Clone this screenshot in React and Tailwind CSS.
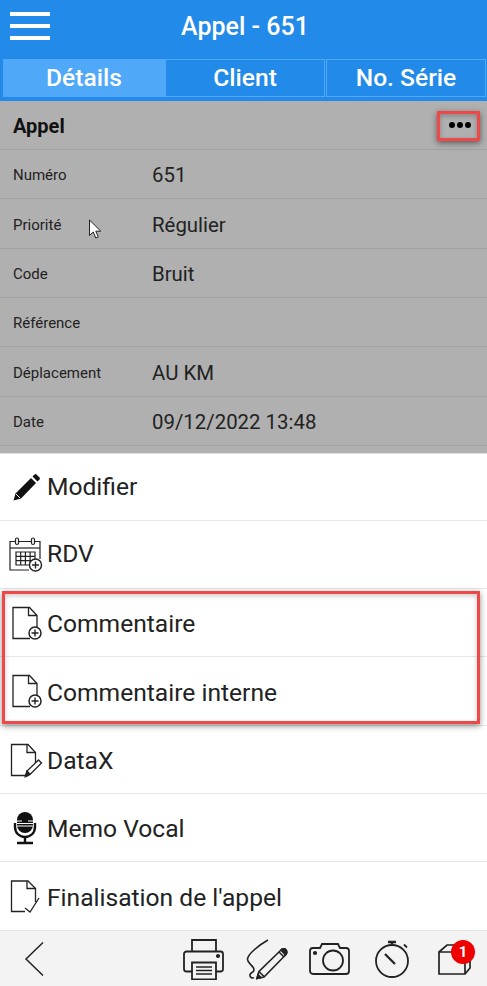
import { useState } from "react";

const details = [
  { label: "Numéro", value: "651" },
  { label: "Priorité", value: "Régulier" },
  { label: "Code", value: "Bruit" },
  { label: "Référence", value: "" },
  { label: "Déplacement", value: "AU KM" },
  { label: "Date", value: "09/12/2022 13:48" },
];

function Doc({ x = 2.5, children }) {
  return (
    <svg width="36" height="36" viewBox="0 0 36 36" fill="none" stroke="#222" strokeWidth="1.3">
      <path d={`M${x + 24} 24V10.500L${x + 16.5} 2.500H${x}V33.500H${x + 17}`} />
      <path d={`M${x + 15.5} 2.500V10.500H${x + 24}`} />
      {children}
    </svg>
  );
}

const icons = {
  pencil: (
    <svg width="36" height="36" viewBox="0 0 36 36" fill="#111">
      <path d="M4.500 31.500 6.500 24.500 22 9l5 5L12 29.500z" />
      <path d="M23.500 7.500 25.500 5.500a1.500 1.500 0 0 1 2 0l3 3a1.500 1.500 0 0 1 0 2L28.500 12.500z" />
      <path d="M7 25 11 29" stroke="#fff" strokeWidth="1" />
    </svg>
  ),
  calendar: (
    <svg width="36" height="36" viewBox="0 0 36 36" fill="none" stroke="#222" strokeWidth="1.200">
      <path d="M31 22V4.500H1V33H20" />
      <path d="M1 11h30" />
      <rect x="6.500" y="1" width="3" height="6.500" rx="1.500" fill="#fff" />
      <rect x="22.500" y="1" width="3" height="6.500" rx="1.500" fill="#fff" />
      <path d="M7 15h19v13H7zM7 19.300h19M7 23.600h19M11.700 15v13M16.400 15v13M21.100 15v13" strokeWidth="1.200" />
      <circle cx="26.500" cy="28" r="6" fill="#fff" strokeWidth="1.400" />
      <path d="M26.500 24.500v7M23 28h7" strokeWidth="1.400" />
    </svg>
  ),
  comment: (
    <Doc x={4}>
      <circle cx="26" cy="28" r="6" fill="#fff" strokeWidth="1.500" />
      <path d="M26 24.500v7M22.500 28h7" strokeWidth="1.400" />
    </Doc>
  ),
  datax: (
    <Doc>
      <path d="M16.500 34.500 18 29 29.500 18l3 3L21 32.500z" fill="#fff" />
      <path d="M16.500 34.500 18 29l3 3z" fill="#222" />
    </Doc>
  ),
  mic: (
    <svg width="36" height="36" viewBox="0 0 36 36" fill="none">
      <rect x="8" y="2" width="16" height="21" rx="8" fill="#111" />
      <path d="M8 11h5M19 11h5M8 13.500h16M8 16h16" stroke="#fff" strokeWidth="1" />
      <path d="M6 13v4c0 6 4.500 10 10 10s10-4 10-10v-4" stroke="#111" strokeWidth="2.400" />
      <path d="M16 27v5M8 33h16" stroke="#111" strokeWidth="2.400" />
    </svg>
  ),
  final: (
    <svg width="36" height="36" viewBox="0 0 36 36" fill="none" stroke="#222" strokeWidth="1.300">
      <path d="M26.500 24V10.500L19 3H2.500V33.500H16" />
      <path d="M18 3V10.500H26.500" />
      <path d="M16 30l5 4 9-14" />
    </svg>
  ),
};

const menu = [
  { label: "Modifier", icon: "pencil", rowH: "h-[67px]", textPad: "" },
  { label: "RDV", icon: "calendar", rowH: "h-[68px]", textPad: "" },
  { label: "Commentaire", icon: "comment", rowH: "h-[68px]", textPad: "pt-1" },
  { label: "Commentaire interne", icon: "comment", rowH: "h-[69px]", textPad: "pt-1" },
  { label: "DataX", icon: "datax", rowH: "h-[68px]", textPad: "pt-1" },
  { label: "Memo Vocal", icon: "mic", rowH: "h-[68px]", textPad: "pt-1" },
  { label: "Finalisation de l'appel", icon: "final", rowH: "h-[69px]", textPad: "pt-1" },
];

const tabs = [
  { label: "Détails", width: "w-[162px]" },
  { label: "Client", width: "w-[160px]" },
  { label: "No. Série", width: "w-[160px] ml-px" },
];

export default function App() {
  const [tab, setTab] = useState("Détails");

  return (
    <div className="relative w-[487px] h-[986px] overflow-hidden bg-white font-['Roboto',sans-serif] text-[#222]">
      {/* HEADER */}
      <div className="bg-[#228ae8] h-[101px]">
        <div className="relative h-[59px] flex items-center justify-center pb-[6px] pl-[3px]">
          <div className="absolute left-[10px] top-[12px] w-10 flex flex-col gap-[8.500px]">
            <div className="h-[3.500px] bg-white" />
            <div className="h-[3.500px] bg-white" />
            <div className="h-[3.500px] bg-white" />
          </div>
          <span className="text-white text-[25px] font-medium">Appel - 651</span>
        </div>
        <div className="flex pl-[3px]">
          {tabs.map((t) => (
            <button
              key={t.label}
              onClick={() => setTab(t.label)}
              className={`${t.width} h-[38px] border border-[#4fa8f8] text-white text-[24.600px] font-medium leading-none ${
                tab === t.label ? "bg-[#4fa8f8]" : "bg-[#228ae8]"
              }`}
            >
              {t.label}
            </button>
          ))}
        </div>
      </div>

      {/* DETAILS (dimmed) */}
      <div className="bg-[#b0b0b0] h-[352px] text-[#111]">
        <div className="h-[49px] flex items-center justify-between pl-[13px] pr-[16px] border-b border-[#a2a2a2]">
          <span className="text-[20px] font-bold pt-[2px]">Appel</span>
          <div className="flex gap-[2px]">
            <span className="w-[6px] h-[6px] rounded-full bg-black" />
            <span className="w-[6px] h-[6px] rounded-full bg-black" />
            <span className="w-[6px] h-[6px] rounded-full bg-black" />
          </div>
        </div>
        {details.map((d) => (
          <div key={d.label} className="h-[49.330px] flex items-center pl-[13px] pt-[3px] border-b border-[#a2a2a2]">
            <span className="w-[139px] text-[15px] text-[#222]">{d.label}</span>
            <span className="text-[20.400px] text-[#222]">{d.value}</span>
          </div>
        ))}
      </div>

      {/* MENU */}
      <div className="border-t border-[#e0e0e0]">
        {menu.map((m) => (
          <div key={m.label} className={`${m.rowH} flex items-center pl-[9px] gap-[2px] border-b border-[#e6e6e6]`}>
            {icons[m.icon]}
            <span className={`text-[24.600px] text-[#222] ${m.textPad}`}>{m.label}</span>
          </div>
        ))}
      </div>

      {/* FOOTER */}
      <div className="h-[56px] bg-[#f3f3f3] flex items-center pl-[22px]">
        <svg width="26" height="36" viewBox="0 0 26 36" fill="none" stroke="#222" strokeWidth="1.500">
          <path d="M21 1.500 4 18l17 16.500" />
        </svg>
        <svg className="ml-[134px]" width="42" height="42" viewBox="0 0 42 42" fill="none" stroke="#222" strokeWidth="1.800">
          <path d="M10 13.500V2h24v11.500" />
          <path d="M10 33.500H4.500a2.500 2.500 0 0 1-2.500-2.500V16a2.500 2.500 0 0 1 2.500-2.500h34a2.500 2.500 0 0 1 2.500 2.500v15a2.500 2.500 0 0 1-2.500 2.500H34" />
          <path d="M10 24.500h24v17H10z" fill="#f3f3f3" />
          <path d="M14 29h16M14 32.500h16M14 36h16" strokeWidth="1.400" />
          <circle cx="36" cy="18" r="1.200" fill="#222" />
        </svg>
        <svg className="ml-[22px]" width="44" height="44" viewBox="0 0 44 44" fill="none" stroke="#222" strokeWidth="1.600">
          <path d="M22 3C13 8 2 17 1.500 22 1 27 8 28 8 33c0 3-5 2-4 6 .5 2 3 2.500 4 1.500" />
          <path d="M11 41.500l2-7L35 13c1.500-1.500 4-1.500 5 0s1 3.500-.5 5L18 40z" />
          <path d="M33 15l5 5M13 34.500l5 5" />
          <path d="M11 41.500l1-4 3 3z" fill="#222" />
          <path d="M35 13c1.500-1.500 4-1.500 5 0s1 3.500-.5 5z" fill="#222" />
        </svg>
        <svg className="ml-[19px]" width="41" height="34" viewBox="0 0 41 34" fill="none" stroke="#222" strokeWidth="1.800">
          <path d="M4 6h7l2-4h16l2 4h6a3 3 0 0 1 3 3v20a3 3 0 0 1-3 3H4a3 3 0 0 1-3-3V9a3 3 0 0 1 3-3z" />
          <circle cx="24" cy="18.500" r="10" />
          <circle cx="6" cy="11" r="1.200" fill="#222" />
        </svg>
        <svg className="ml-[25px]" width="36" height="38" viewBox="0 0 36 38" fill="none" stroke="#222" strokeWidth="1.800">
          <circle cx="17" cy="21" r="16" />
          <path d="M10 14l10 10" strokeWidth="2.200" />
          <path d="M13 2h8M17 2v3" strokeWidth="2.400" />
          <path d="M29 4.500l3 3" />
        </svg>
        <div className="relative ml-[27px] w-[34px] h-[34px]">
          <svg width="34" height="34" viewBox="0 0 34 34" fill="none" stroke="#222" strokeWidth="1.700">
            <path d="M1 10v22h26V10H1zM1 10 9 3h20M27 32l5-6V12" />
          </svg>
          <span className="absolute -top-[2px] left-[13px] w-[24px] h-[24px] rounded-full bg-[#ee0000] text-white text-[15px] font-bold flex items-center justify-center">
            1
          </span>
        </div>
      </div>

      {/* ANNOTATIONS */}
      <div className="absolute left-[437px] top-[111px] w-[43px] h-[30px] border-[3px] border-[#f04848] shadow-[0_2px_6px_rgba(0,0,0,0.5),inset_0_2px_5px_rgba(0,0,0,0.25)]" />
      <div className="absolute left-[2px] top-[591px] w-[478px] h-[133px] border-[3px] border-[#f04848] shadow-[0_2px_6px_rgba(0,0,0,0.45),inset_0_2px_5px_rgba(0,0,0,0.2)]" />
      <svg className="absolute left-[88px] top-[219px]" width="15" height="21" viewBox="0 0 15 21">
        <path d="M1.500 1v15.500l3.800-3.500 2.500 6 2.500-1-2.500-5.800h5z" fill="#fff" stroke="#222" strokeWidth="1" />
      </svg>
    </div>
  );
}
